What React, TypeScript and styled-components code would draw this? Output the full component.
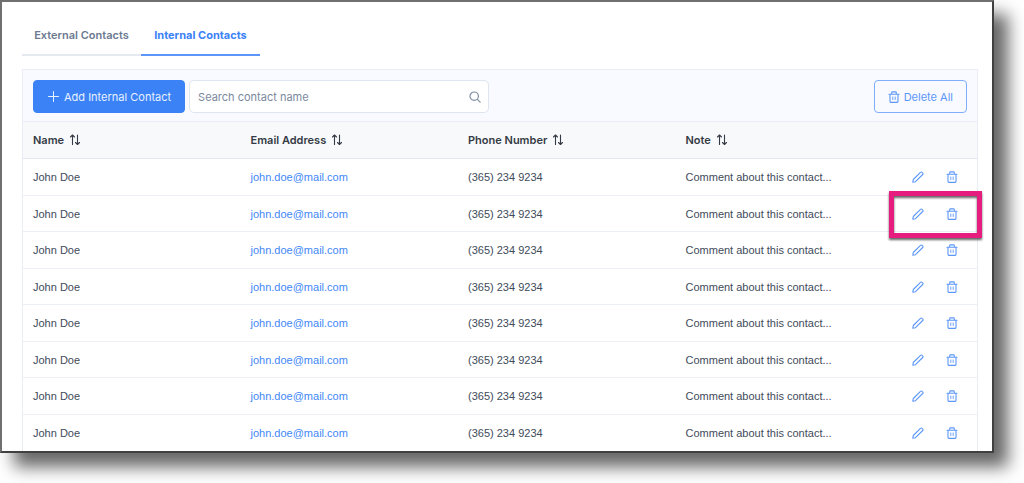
import React from "react";
import styled, { createGlobalStyle } from "styled-components";

const GlobalStyle = createGlobalStyle`
  *, *::before, *::after { box-sizing: border-box; }
  body {
    margin: 0;
    background: #fff;
    color: #414b5a;
    font: 11px/16px Inter, "Liberation Sans", sans-serif;
  }
  button, input { font: inherit; }
`;

const Window = styled.main`
  margin: 0 30px 31px 0;
  padding: 12px 14px 0 20px;
  border: 2px solid;
  border-color: #707070 #404040 #404040 #707070;
  background: #fff;
  box-shadow: 14px 14px 16px 0 rgba(0, 0, 0, 0.6);
`;

const Tabs = styled.div`
  display: flex;
  margin-bottom: 13px;
`;

const Tab = styled.button<{ $active?: boolean }>`
  width: 119px;
  height: 42px;
  padding: 2px 0 0;
  border: 0;
  border-bottom: 2px solid ${(p) => (p.$active ? "#5b97f8" : "#e5e9f0")};
  background: none;
  color: ${(p) => (p.$active ? "#3b82f6" : "#6b7a90")};
  font-weight: ${(p) => (p.$active ? 700 : 600)};
  cursor: pointer;
`;

const Panel = styled.section`
  border: 1px solid #e9edf5;
  border-bottom: 0;
`;

const Toolbar = styled.div`
  display: flex;
  align-items: center;
  gap: 4px;
  padding: 10px 10px 8px 10px;
  background: #f8faff;
  border-bottom: 1px solid #e9edf5;
`;

const Button = styled.button<{ $outlined?: boolean }>`
  display: flex;
  align-items: center;
  justify-content: center;
  gap: 4px;
  height: 33px;
  padding: 0 13px;
  border: 1px solid ${(p) => (p.$outlined ? "#7eaefa" : "#3b82f6")};
  border-radius: 4px;
  background: ${(p) => (p.$outlined ? "transparent" : "#3b82f6")};
  color: ${(p) => (p.$outlined ? "#5c97f8" : "#e8f1ff")};
  margin-left: ${(p) => (p.$outlined ? "auto" : "0")};
  cursor: pointer;
`;

const SearchBox = styled.label`
  display: flex;
  align-items: center;
  width: 300px;
  height: 33px;
  padding: 0 7px 0 8px;
  border: 1px solid #dfe5ee;
  border-radius: 5px;
  background: #fff;
  color: #8190a5;
`;

const SearchInput = styled.input`
  flex: 1;
  min-width: 0;
  padding: 0;
  border: 0;
  outline: 0;
  background: none;
  &::placeholder { color: #7b899d; opacity: 1; }
`;

const Table = styled.table`
  width: 100%;
  table-layout: fixed;
  border-collapse: separate;
  border-spacing: 0;
`;

const HeadCell = styled.th<{ $wide?: boolean }>`
  width: ${(p) => (p.$wide ? "22.8%" : "auto")};
  height: 37px;
  padding: 0 10px;
  border-bottom: 1px solid #e2e8f0;
  background: #f8f9fb;
  color: #343b45;
  font-weight: 600;
  text-align: left;
`;

const SortButton = styled.button`
  display: flex;
  align-items: center;
  gap: 5px;
  padding: 0;
  border: 0;
  background: none;
  color: inherit;
  cursor: pointer;
`;

const Row = styled.tr`
  height: 37px;
  &:nth-child(even) { height: 36px; }
  &:not(:last-child) td { border-bottom: 1px solid #eceff5; }
`;

const Cell = styled.td`
  position: relative;
  padding: 0 10px;
  font-family: "Liberation Sans", Inter, sans-serif;
`;

const MailLink = styled.a`
  color: #4287f7;
  text-decoration: none;
`;

const Actions = styled.div`
  display: flex;
  justify-content: flex-end;
  gap: 22px;
  padding-right: 9px;
`;

const IconButton = styled.button`
  display: flex;
  padding: 0;
  border: 0;
  background: none;
  color: #5c97f8;
  cursor: pointer;
`;

const Highlight = styled.span`
  position: absolute;
  inset: -5px -5px -7px -4px;
  border: 5px solid #e61c7f;
  filter: drop-shadow(0 2px 1px rgba(0, 0, 0, 0.6));
  pointer-events: none;
`;

const Svg = styled.svg`
  flex: none;
  fill: none;
  stroke: currentColor;
  stroke-linecap: round;
  stroke-linejoin: round;
`;

const PlusIcon = () => (
  <Svg width="13" height="13" viewBox="0 0 13 13" aria-hidden>
    <path d="M6.5 1.5v10M1.5 6.5h10" />
  </Svg>
);

const SearchIcon = () => (
  <Svg width="12" height="12" viewBox="0 0 12 12" strokeWidth="1.2" aria-hidden>
    <circle cx="5.2" cy="5.2" r="4.200" />
    <path d="M8.300 8.300l2.900 2.900" />
  </Svg>
);

const SortIcon = () => (
  <Svg width="12" height="12" viewBox="0 0 12 12" strokeWidth="1.1" aria-hidden>
    <path d="M3.500 10.500V1M1.500 3L3.500 1l2 2M8.500 1v9.500M6.500 8.500l2 2 2-2" />
  </Svg>
);

const PencilIcon = () => (
  <Svg width="12" height="12" viewBox="0 0 12 12" strokeWidth="1.1" aria-hidden>
    <path d="M.8 11.200l.5-2.700L8.500 1.300a1.100 1.100 0 0 1 1.600 0l.6.6a1.100 1.100 0 0 1 0 1.600L3.500 10.700z" />
  </Svg>
);

const TrashIcon = () => (
  <Svg width="12" height="12" viewBox="0 0 12 12" strokeWidth="1.1" aria-hidden>
    <path d="M1 3.200h10M2 3.200v7a1.200 1.200 0 0 0 1.200 1.200h5.600A1.200 1.200 0 0 0 10 10.200v-7M3.700 3.200V1.700a.8.8 0 0 1 .8-.8h3a.8.8 0 0 1 .8.8v1.500" />
    <path d="M4.800 6v2.500M7.200 6v2.500" strokeWidth="0.900" />
  </Svg>
);

const columns = ["Name", "Email Address", "Phone Number", "Note"];

const contacts = Array.from({ length: 8 }, (_, id) => ({
  id,
  name: "John Doe",
  email: "john.doe@mail.com",
  phone: "(365) 234 9234",
  note: "Comment about this contact...",
  highlighted: id === 1,
}));

export default function App() {
  return (
    <>
      <GlobalStyle />
      <Window>
        <Tabs role="tablist">
          <Tab role="tab" aria-selected={false}>External Contacts</Tab>
          <Tab role="tab" aria-selected $active>Internal Contacts</Tab>
        </Tabs>
        <Panel>
          <Toolbar>
            <Button><PlusIcon />Add Internal Contact</Button>
            <SearchBox>
              <SearchInput type="text" placeholder="Search contact name" aria-label="Search contact name" />
              <SearchIcon />
            </SearchBox>
            <Button $outlined><TrashIcon />Delete All</Button>
          </Toolbar>
          <Table>
            <thead>
              <tr>
                {columns.map((column) => (
                  <HeadCell key={column} $wide scope="col">
                    <SortButton>{column}<SortIcon /></SortButton>
                  </HeadCell>
                ))}
                <HeadCell aria-label="Actions" />
              </tr>
            </thead>
            <tbody>
              {contacts.map((contact) => (
                <Row key={contact.id}>
                  <Cell>{contact.name}</Cell>
                  <Cell><MailLink href={`mailto:${contact.email}`}>{contact.email}</MailLink></Cell>
                  <Cell>{contact.phone}</Cell>
                  <Cell>{contact.note}</Cell>
                  <Cell>
                    <Actions>
                      <IconButton aria-label="Edit contact"><PencilIcon /></IconButton>
                      <IconButton aria-label="Delete contact"><TrashIcon /></IconButton>
                    </Actions>
                    {contact.highlighted && <Highlight />}
                  </Cell>
                </Row>
              ))}
            </tbody>
          </Table>
        </Panel>
      </Window>
    </>
  );
}
